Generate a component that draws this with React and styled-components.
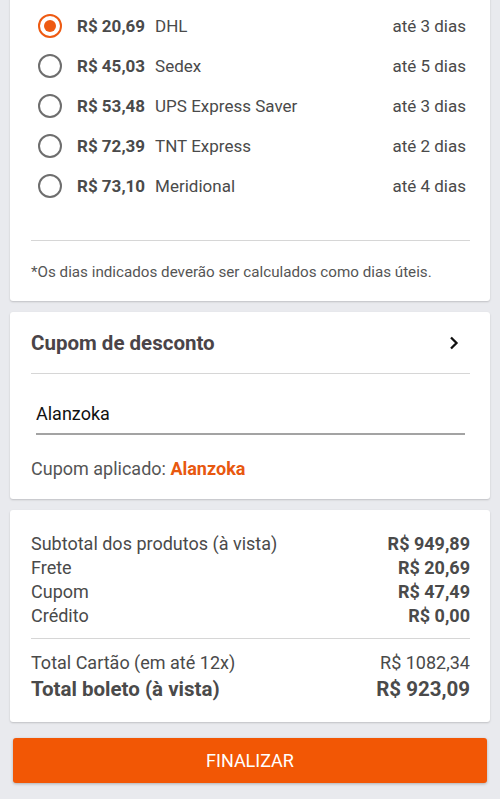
import React from "react";
import styled, { createGlobalStyle } from "styled-components";

const GlobalStyle = createGlobalStyle`
  html, body {
    margin: 0;
    padding: 0;
    background: #e9eaee;
    font-family: Roboto, "Noto Sans", "Liberation Sans", sans-serif;
    color: #4a4a4a;
  }
`;

const fretes = [
  { price: "R$ 20,69", name: "DHL", prazo: "até 3 dias", checked: true },
  { price: "R$ 45,03", name: "Sedex", prazo: "até 5 dias" },
  { price: "R$ 53,48", name: "UPS Express Saver", prazo: "até 3 dias" },
  { price: "R$ 72,39", name: "TNT Express", prazo: "até 2 dias" },
  { price: "R$ 73,10", name: "Meridional", prazo: "até 4 dias" },
];

const resumo = [
  { label: "Subtotal dos produtos (à vista)", value: "R$ 949,89" },
  { label: "Frete", value: "R$ 20,69" },
  { label: "Cupom", value: "R$ 47,49" },
  { label: "Crédito", value: "R$ 0,00" },
];

const App = () => {
  return (
    <Page>
      <GlobalStyle />
      <FreteCard>
        <FreteList>
          {fretes.map((f) => (
            <FreteRow key={f.name}>
              <Radio $checked={f.checked} />
              <Price>{f.price}</Price>
              <Carrier>{f.name}</Carrier>
              <Prazo>{f.prazo}</Prazo>
            </FreteRow>
          ))}
        </FreteList>
        <Divider />
        <Note>*Os dias indicados deverão ser calculados como dias úteis.</Note>
      </FreteCard>

      <Card>
        <CupomHeader>
          <CupomTitle>Cupom de desconto</CupomTitle>
          <svg width="10" height="14" viewBox="0 0 10 14">
            <path d="M2 1.5 L7.5 7 L2 12.5" fill="none" stroke="#111" strokeWidth="2.3" />
          </svg>
        </CupomHeader>
        <Divider />
        <CupomInput defaultValue="Alanzoka" />
        <Applied>
          Cupom aplicado: <strong>Alanzoka</strong>
        </Applied>
      </Card>

      <Card>
        <Summary>
          {resumo.map((r) => (
            <SumRow key={r.label}>
              <span>{r.label}</span>
              <SumValue>{r.value}</SumValue>
            </SumRow>
          ))}
        </Summary>
        <Divider />
        <Totals>
          <SumRow>
            <span>Total Cartão (em até 12x)</span>
            <span>R$ 1082,34</span>
          </SumRow>
          <SumRow $big>
            <span>Total boleto (à vista)</span>
            <span>R$ 923,09</span>
          </SumRow>
        </Totals>
      </Card>

      <FinishBtn>FINALIZAR</FinishBtn>
    </Page>
  );
};

export default App;

const Page = styled.div`
  display: flex;
  flex-direction: column;
  gap: 11px;
  padding: 0 10px 16px;
  height: 799px;
  box-sizing: border-box;
  overflow: hidden;
`;

const Card = styled.div`
  background: #fff;
  border-radius: 3px;
  box-shadow: 0 1px 2px rgba(0, 0, 0, 0.18);
  padding: 0 20px 0 21px;
  flex-shrink: 0;
`;

const FreteCard = styled(Card)`
  margin-top: -8px;
  padding-top: 14px;
  padding-bottom: 20px;
  border-radius: 0 0 3px 3px;
`;

const FreteList = styled.div`
  display: flex;
  flex-direction: column;
  padding-bottom: 34px;
`;

const FreteRow = styled.div`
  display: flex;
  align-items: center;
  height: 40px;
  padding-left: 7px;
  font-size: 17px;
`;

const Radio = styled.span`
  width: 24px;
  height: 24px;
  box-sizing: border-box;
  border-radius: 50%;
  border: ${(p) => (p.$checked ? "2.5px solid #ee5a12" : "2px solid #6e6e6e")};
  display: flex;
  align-items: center;
  justify-content: center;
  margin-right: 15px;
  flex-shrink: 0;

  &::after {
    content: "";
    display: ${(p) => (p.$checked ? "block" : "none")};
    width: 12px;
    height: 12px;
    border-radius: 50%;
    background: #ee5a12;
  }
`;

const Price = styled.span`
  font-weight: 700;
  margin-right: 10px;
`;

const Carrier = styled.span`
  flex: 1;
`;

const Prazo = styled.span`
  margin-right: 4px;
`;

const Divider = styled.div`
  height: 1px;
  background: #d6d6d6;
`;

const Note = styled.div`
  font-size: 15.2px;
  line-height: 18px;
  padding-top: 22px;
  color: #555;
`;

const CupomHeader = styled.div`
  display: flex;
  align-items: center;
  justify-content: space-between;
  height: 61px;
  padding-right: 11px;
`;

const CupomTitle = styled.div`
  font-size: 20.5px;
  font-weight: 700;
  color: #4a4448;
`;

const CupomInput = styled.input`
  display: block;
  width: calc(100% - 10px);
  margin: 29px 0 0 5px;
  box-sizing: border-box;
  border: none;
  border-bottom: 2px solid #a3a3a3;
  outline: none;
  padding: 0 0 9px;
  font-family: inherit;
  font-size: 18px;
  line-height: 21px;
  color: #111;
  background: transparent;
`;

const Applied = styled.div`
  font-size: 18px;
  line-height: 21px;
  padding: 23px 0 20px;
  color: #555;

  strong {
    color: #e8580f;
    font-weight: 700;
  }
`;

const Summary = styled.div`
  padding: 22px 0 10px;
`;

const SumRow = styled.div`
  display: flex;
  justify-content: space-between;
  font-size: ${(p) => (p.$big ? "20.5px" : "18px")};
  font-weight: ${(p) => (p.$big ? 700 : 400)};
  line-height: ${(p) => (p.$big ? "28px" : "24px")};
`;

const SumValue = styled.span`
  font-weight: 700;
`;

const Totals = styled.div`
  padding: 12px 0 19px;
`;

const FinishBtn = styled.button`
  margin: 5px 3px 0;
  height: 45px;
  flex-shrink: 0;
  border: none;
  border-radius: 3px;
  background: #f25705;
  color: #fff;
  font-family: inherit;
  font-size: 18px;
  box-shadow: 0 1px 3px rgba(0, 0, 0, 0.25);
`;
